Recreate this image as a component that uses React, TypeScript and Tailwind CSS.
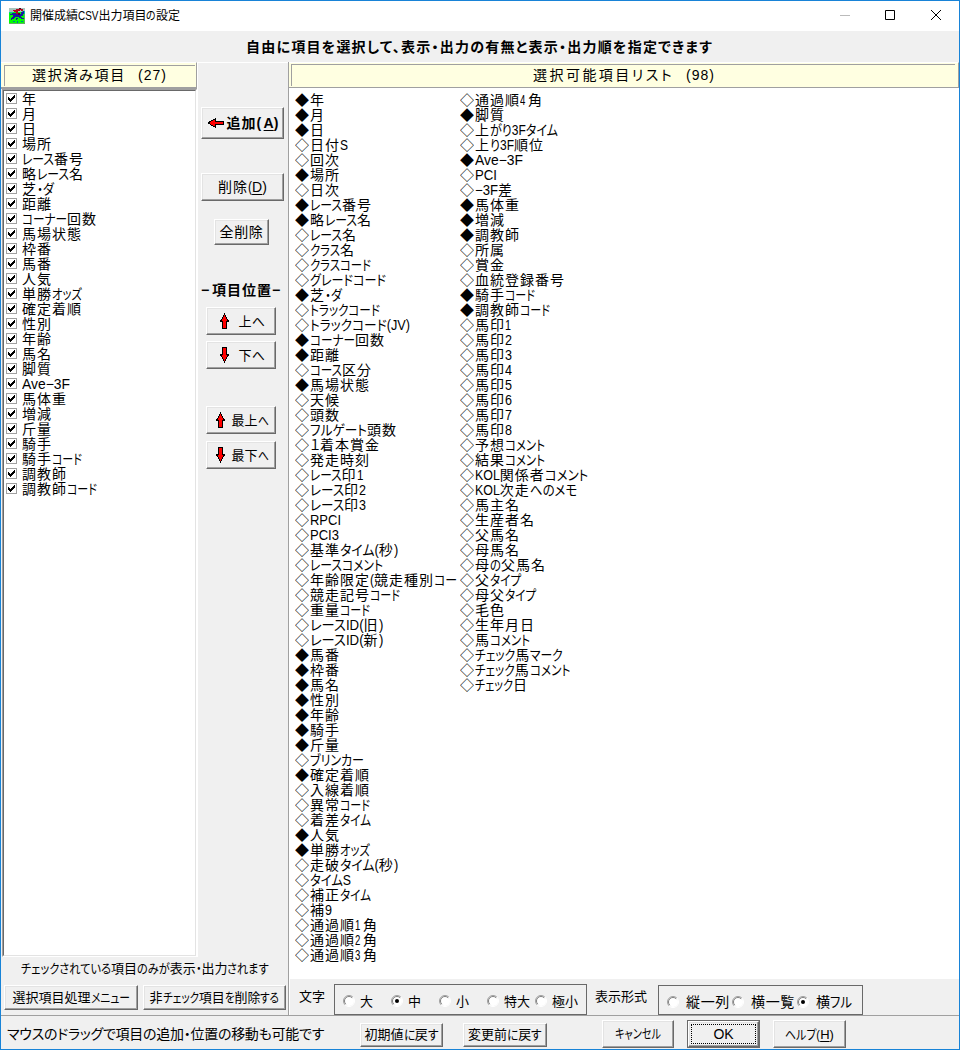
import { useLayoutEffect, useRef, useState } from 'react';
import type { ReactNode } from 'react';

const KANJI = /[\u3400-\u9fff]/;

/*
 * Text set to a given width. Ideographs keep their pitch (glyph plus `gap`); kana and
 * latin runs are condensed or tracked out to fill what is left. With `even`, all
 * characters are tracked alike.
 */
function Fit({ t, w, even, gap = 0, className = '' }: { t: string; w: number; even?: boolean; gap?: number; className?: string }) {
  const ref = useRef<HTMLSpanElement>(null);
  const [fit, setFit] = useState<{ sp: number; scale: number; widths: number[] }>({ sp: 0, scale: 1, widths: [] });
  const parts = t.match(/[\u3400-\u9fff]+|[^\u3400-\u9fff]+/g) || [];
  const anyLoose = parts.some((p) => !KANJI.test(p));
  const keep = anyLoose && !even;
  useLayoutEffect(() => {
    if (!ref.current) return;
    const widths = Array.from(ref.current.children).map((c) => (c as HTMLElement).getBoundingClientRect().width);
    const total = widths.reduce((a, b) => a + b, 0);
    const loose = parts.reduce((a, p, i) => a + (KANJI.test(p) ? 0 : widths[i]), 0);
    const chars = parts.reduce((a, p) => a + (KANJI.test(p) ? 0 : p.length), 0);
    if (even || !chars) setFit({ sp: (w - total) / t.length, scale: 1, widths: [] });
    else if (w < total) setFit({ sp: 0, scale: (w - total + loose) / loose, widths });
    else setFit({ sp: (w - total) / chars, scale: 1, widths: [] });
  }, []);
  return (
    <span className={'block shrink-0 whitespace-pre ' + className} style={{ width: w }}>
      <span ref={ref} className="flex">
        {parts.map((p, i) => {
          const kanji = KANJI.test(p);
          if (fit.scale < 1 && !kanji)
            return (
              <span key={i} className="block shrink-0 origin-left" style={{ width: fit.widths[i], marginRight: fit.widths[i] * (fit.scale - 1), transform: `scaleX(${fit.scale})` }}>{p}</span>
            );
          return <span key={i} className="block shrink-0" style={{ letterSpacing: kanji && keep ? gap : fit.sp }}>{p}</span>;
        })}
      </span>
    </span>
  );
}

const selected: [string, number?][] = [
  ['年'], ['月'], ['日'], ['場所'], ['レース番号', 62], ['略レース名', 62], ['芝・ダ', 32], ['距離'],
  ['コーナー回数', 75], ['馬場状態'], ['枠番'], ['馬番'], ['人気'], ['単勝オッズ', 60], ['確定着順'],
  ['性別'], ['年齢'], ['馬名'], ['脚質'], ['Ave−3F', 48], ['馬体重'], ['増減'], ['斤量'], ['騎手'],
  ['騎手コード', 60], ['調教師'], ['調教師コード', 75],
];

type Item = [number, string, number?];
const colA: Item[] = [
  [1, '年'], [1, '月'], [1, '日'], [0, '日付S', 38], [0, '回次'], [1, '場所'], [0, '日次'],
  [1, 'レース番号', 62], [1, '略レース名', 62], [0, 'レース名', 47], [0, 'クラス名', 45],
  [0, 'クラスコード', 61], [0, 'グレードコード', 76], [1, '芝・ダ', 32], [0, 'トラックコード', 70],
  [0, 'トラックコード(JV)', 100], [1, 'コーナー回数', 75], [1, '距離'], [0, 'コース区分', 62],
  [1, '馬場状態'], [0, '天候'], [0, '頭数'], [0, 'フルゲート頭数', 87], [0, '１着本賞金', 70],
  [0, '発走時刻'], [0, 'レース印1', 53], [0, 'レース印2', 56], [0, 'レース印3', 56], [0, 'RPCI', 31],
  [0, 'PCI3', 29], [0, '基準タイム(秒)', 88], [0, 'レースコメント', 73],
  [0, '年齢限定(競走種別コー', 147], [0, '競走記号コード', 90], [0, '重量コード', 60],
  [0, 'レースID(旧)', 73], [0, 'レースID(新)', 73], [1, '馬番'], [1, '枠番'], [1, '馬名'], [1, '性別'],
  [1, '年齢'], [1, '騎手'], [1, '斤量'], [0, 'ブリンカー', 54], [1, '確定着順'], [0, '入線着順'],
  [0, '異常コード', 60], [0, '着差タイム', 61], [1, '人気'], [1, '単勝オッズ', 60],
  [0, '走破タイム(秒)', 88], [0, 'タイムS', 41], [0, '補正タイム', 61], [0, '補9', 22],
  [0, '通過順1 角', 68], [0, '通過順2 角', 68], [0, '通過順3 角', 68],
];
const colB: Item[] = [
  [0, '通過順4 角', 68], [1, '脚質'], [0, '上がり3Fタイム', 83], [0, '上り3F順位', 69], [1, 'Ave−3F', 48],
  [0, 'PCI', 22], [0, '−3F差', 38], [1, '馬体重'], [1, '増減'], [1, '調教師'], [0, '所属'], [0, '賞金'],
  [0, '血統登録番号'], [1, '騎手コード', 60], [1, '調教師コード', 75], [0, '馬印1', 36], [0, '馬印2', 37],
  [0, '馬印3', 37], [0, '馬印4', 37], [0, '馬印5', 37], [0, '馬印6', 37], [0, '馬印7', 37], [0, '馬印8', 37],
  [0, '予想コメント', 70], [0, '結果コメント', 70], [0, 'KOL関係者コメント', 113], [0, 'KOL次走へのメモ', 102],
  [0, '馬主名'], [0, '生産者名'], [0, '父馬名'], [0, '母馬名'], [0, '母の父馬名', 71], [0, '父タイプ', 46],
  [0, '母父タイプ', 61], [0, '毛色'], [0, '生年月日'], [0, '馬コメント', 55], [0, 'チェック馬マーク', 88],
  [0, 'チェック馬コメント', 95], [0, 'チェック日', 53],
];

const Check = () => (
  <svg width="11" height="11" viewBox="0 0 11 11" className="shrink-0" shapeRendering="crispEdges">
    <rect x=".5" y=".5" width="10" height="10" fill="#fff" stroke="#a0a0a0" />
    <path d="M2 4h1v1h1v1h1V5h1V4h1V3h1V2h1v3H8v1H7v1H6v1H5v1H4V8H3V7H2z" fill="#000" />
  </svg>
);

const Column = ({ items }: { items: Item[] }) => (
  <div className="w-[165px] text-[14px]">
    {items.map(([on, t, w], i) => (
      <div key={i} className="flex h-[15px] items-center leading-[15px]">
        <span className="w-[16px] shrink-0 pl-px opacity-[0.99]">{on ? '◆' : '◇'}</span>
        <Fit t={t} w={w ?? t.length * 15} gap={1} />
      </div>
    ))}
  </div>
);

function Btn({ children, className = '' }: { children: ReactNode; className?: string }) {
  return (
    <button className={'flex shrink-0 items-center justify-center border border-b-[#696969] border-l-white border-r-[#696969] border-t-white shadow-[inset_-1px_-1px_0_#a0a0a0,inset_1px_1px_0_#e3e3e3] ' + className}>
      {children}
    </button>
  );
}

const Arrow = ({ className = '' }: { className?: string }) => (
  <svg width="9" height="16" viewBox="0 0 9 16" className={'shrink-0 ' + className} shapeRendering="crispEdges">
    <path d="M4.5 1 8.5 8.5H6.5V15.5H2.5V8.5H.5z" fill="#f00" stroke="#000" />
  </svg>
);

const Radio = ({ on }: { on?: boolean }) => (
  <svg width="12" height="12" viewBox="0 0 12 12" className="shrink-0">
    <circle cx="6" cy="6" r="5" fill="#fff" />
    <path d="M2.1 9.9A5.5 5.5 0 0 1 9.9 2.1" fill="none" stroke="#a0a0a0" />
    <path d="M2.8 9.2A4.5 4.5 0 0 1 9.2 2.8" fill="none" stroke="#808080" />
    <path d="M2.1 9.9A5.5 5.5 0 0 0 9.9 2.1" fill="none" stroke="#fff" />
    {on && <circle cx="6" cy="6" r="2" />}
  </svg>
);

const Horse = () => (
  <svg width="16" height="16" viewBox="0 0 16 16" shapeRendering="crispEdges">
    <rect width="16" height="16" fill="#0f0" />
    <path d="M0 0h16v4H0z" fill="#a8c4bc" />
    <path d="M0 4h4v1H0zM13 3h3v3h-3z" fill="#00c8a0" />
    <path d="M1 6h2V5h4v1h5V4h2V3h1v3h-1v2h-2v1h1v1h2v1h-3v-1h-2V9H6v1H5v1H3v1H2v-2h1V9h1V7H1zM7 10h2v1H8v1H7z" fill="#1818a0" />
    <path d="M4 2h3V1h3V0h2v1h2v1h-3v1H9v3H7V4H5V3H4zM12 2h2v1h-2z" fill="#b00820" />
    <path d="M10 0h2v1h-2zM9 5h2v2H9z" fill="#500018" />
    <path d="M4 13h2v1H4zM8 13h1v2H8zM12 13h2v1h-2z" fill="#0070a0" />
    <path d="M0 15h16v1H0zM15 6h1v10h-1z" fill="#60b060" />
  </svg>
);

export default function App() {
  return (
    <div className="flex h-[1050px] w-[960px] flex-col overflow-hidden border border-[#1883d7] bg-[#f0f0f0] font-['Liberation_Sans','Noto_Sans_CJK_JP',sans-serif] text-[15px] leading-none text-black [font-feature-settings:'palt']">
      <header className="flex h-[30px] shrink-0 items-center bg-white pl-2">
        <Horse />
        <Fit t="開催成績CSV出力項目の設定" w={150} className="ml-[5px] text-[12px]" />
        <svg width="110" height="14" viewBox="0 0 110 14" className="ml-auto mr-3 -translate-y-px" fill="none">
          <path d="M3 7.5h10" stroke="#bbb" />
          <path d="M48.5 2.5h9v9h-9z" stroke="#000" />
          <path d="m94 2 10 10m0-10-10 10" stroke="#000" />
        </svg>
      </header>
      <div className="flex h-[31px] shrink-0 items-center pl-[245px]">
        <Fit even t="自由に項目を選択して、表示・出力の有無と表示・出力順を指定できます" w={467} className="text-[14px] font-bold" />
      </div>

      <main className="flex h-[953px] shrink-0">
        <section className="flex w-[287px] shrink-0 flex-col">
          <div className="flex h-[895px] shrink-0">
            <div className="flex w-[196px] shrink-0 flex-col">
              <div className="h-[27px] border-b-2 border-r border-t border-b-[#a0a0a0] border-r-[#a0a0a0] border-t-white bg-[#ffffe1]">
                <div className="ml-[3px] mr-px mt-[2px] flex h-[21px] items-center gap-3 border-l border-t border-[#a0a0a0] pb-[2px] pl-[27px] text-[14px]">
                  <Fit even t="選択済み項目" w={94} />
                  <Fit t="(27)" w={29} />
                </div>
              </div>
              <div className="ml-px h-[868px] border border-b-white border-l-[#a0a0a0] border-r-white border-t-[#a0a0a0]">
                <div className="h-full border border-b-[#e3e3e3] border-l-[#696969] border-r-[#e3e3e3] border-t-[#696969] bg-white pl-[2px] text-[14px]">
                  {selected.map(([t, w], i) => (
                    <div key={i} className="flex h-[15px] items-center gap-[5px] leading-[15px]">
                      <Check />
                      <Fit t={t} w={w ?? t.length * 15} gap={1} className="pt-px" />
                    </div>
                  ))}
                </div>
              </div>
            </div>
            <div className="flex flex-1 flex-col items-start border-l border-t border-white pl-[3px]">
              <Btn className="mt-[44px] h-8 w-[83px] gap-[3px]">
                <svg width="17" height="10" viewBox="0 0 17 10" className="shrink-0" shapeRendering="crispEdges"><path d="M1 5 8.5.5v3h8v3h-8v3z" fill="#f00" stroke="#000" /></svg>
                <span className="flex text-[14px] font-bold"><Fit t="追加(" w={37} gap={1} /><span className="underline underline-offset-2">A</span>)</span>
              </Btn>
              <Btn className="mt-[34px] h-7 w-[83px] text-[14px]"><Fit t="削除(" w={34} gap={1} /><span className="underline underline-offset-2">D</span>)</Btn>
              <Btn className="ml-[13px] mt-[18px] h-[26px] w-[55px] text-[14px]"><Fit t="全削除" w={44} /></Btn>
              <Fit t="−項目位置−" w={82} gap={1} className="mt-[38px] text-[14px] font-bold" />
              <Btn className="ml-[5px] mt-[10px] h-7 w-[70px] gap-[10px] pl-[2px]"><Arrow /><Fit t="上へ" w={26} className="text-[13px]" /></Btn>
              <Btn className="ml-[5px] mt-[6px] h-7 w-[70px] gap-[10px] pl-[2px]"><Arrow className="rotate-180" /><Fit t="下へ" w={26} className="text-[13px]" /></Btn>
              <Btn className="ml-[5px] mt-[37px] h-7 w-[70px] gap-[7px] pl-[2px]"><Arrow /><Fit t="最上へ" w={37} className="text-[13px]" /></Btn>
              <Btn className="ml-[5px] mt-[7px] h-7 w-[70px] gap-[7px] pl-[2px]"><Arrow className="rotate-180" /><Fit t="最下へ" w={37} className="text-[13px]" /></Btn>
            </div>
          </div>
          <Fit t="チェックされている項目のみが表示・出力されます" w={248} className="ml-5 mt-[5px] text-[13px]" />
          <div className="mt-[10px] flex gap-[5px] pl-[3px]">
            <Btn className="h-[25px] w-[134px] pb-px"><Fit t="選択項目処理メニュー" w={117} className="text-[13px]" /></Btn>
            <Btn className="h-[25px] w-[143px] pb-px"><Fit t="非チェック項目を削除する" w={130} className="text-[13px]" /></Btn>
          </div>
        </section>

        <section className="flex flex-1 flex-col border-l border-[#a0a0a0]">
          <div className="h-[26px] shrink-0 border-b border-r border-t border-b-[#a0a0a0] border-r-[#a0a0a0] border-t-white bg-[#ffffe1]">
            <div className="ml-[2px] mr-[3px] mt-px flex h-[22px] items-center gap-3 border-l border-t border-[#a0a0a0] pb-[2px] pl-[241px] text-[14px]">
              <Fit even t="選択可能項目リスト" w={141} />
              <Fit t="(98)" w={29} />
            </div>
          </div>
          <div className="flex h-[891px] shrink-0 bg-white pl-[5px] pt-[5px]">
            <Column items={colA} />
            <Column items={colB} />
          </div>
          <div className="flex flex-1 items-start border-l border-white text-[13px]">
            <Fit t="文字" w={26} className="ml-[9px] mt-[11px]" />
            <div className="ml-[9px] mt-[5px] flex h-[31px] w-[253px] items-center border border-[#696969] pl-2 pt-[3px]">
              <div className="flex w-12 items-center gap-[5px]"><Radio /><Fit t="大" w={13} /></div>
              <div className="flex w-12 items-center gap-[5px]"><Radio on /><Fit t="中" w={13} /></div>
              <div className="flex w-12 items-center gap-[5px]"><Radio /><Fit t="小" w={13} /></div>
              <div className="flex w-12 items-center gap-[5px]"><Radio /><Fit t="特大" w={26} /></div>
              <div className="flex w-12 items-center gap-[5px]"><Radio /><Fit t="極小" w={26} /></div>
            </div>
            <Fit t="表示形式" w={52} className="ml-2 mt-[11px]" />
            <div className="ml-[11px] mt-[6px] flex h-[30px] w-[205px] items-center border border-[#696969] pl-2 pt-[3px] text-[14px]">
              <div className="flex w-[65px] items-center gap-[7px]"><Radio /><Fit t="縦一列" w={44} /></div>
              <div className="flex w-[65px] items-center gap-[7px]"><Radio /><Fit t="横一覧" w={44} /></div>
              <div className="flex w-[65px] items-center gap-[7px]"><Radio on /><Fit t="横フル" w={36} /></div>
            </div>
          </div>
        </section>
      </main>

      <footer className="flex flex-1 items-start border-t border-[#a0a0a0] text-[13px]">
        <Fit even t="マウスのドラッグで項目の追加・位置の移動も可能です" w={317} className="ml-[6px] mt-[11px] text-[14px]" />
        <Btn className="ml-[36px] mt-[7px] h-6 w-[83px] pb-[2px]"><Fit t="初期値に戻す" w={74} /></Btn>
        <Btn className="ml-5 mt-[7px] h-6 w-[84px] pb-[2px]"><Fit t="変更前に戻す" w={74} /></Btn>
        <Btn className="ml-[55px] mt-1 h-7 w-[72px] pb-[2px]"><Fit t="キャンセル" w={46} /></Btn>
        <div className="ml-[13px] mt-1 h-7 w-[73px] border border-[#696969]">
          <Btn className="h-full w-full p-[2px]"><span className="flex h-full w-full items-center justify-center border border-dotted border-black text-[14px]">OK</span></Btn>
        </div>
        <Btn className="ml-[13px] mt-1 h-7 w-[73px]"><Fit t="ヘルプ(" w={35} /><span className="underline underline-offset-2">H</span>)</Btn>
      </footer>
    </div>
  );
}
